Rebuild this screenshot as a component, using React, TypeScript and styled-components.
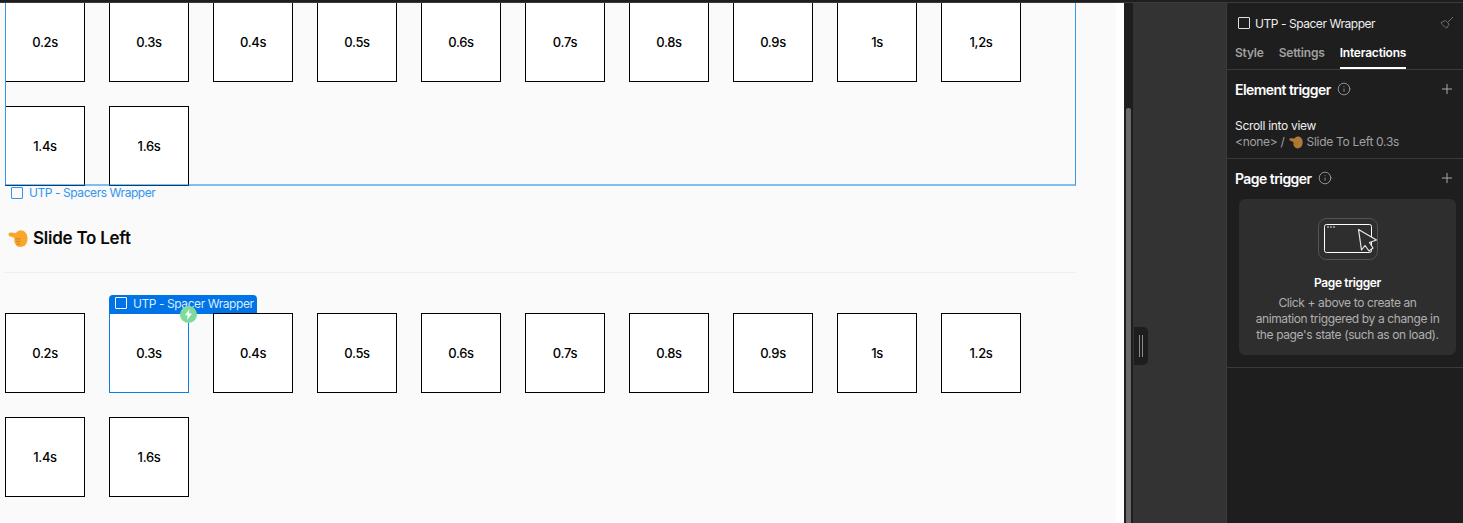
import React from 'react';
import styled, { createGlobalStyle } from 'styled-components';
import { Info, Plus } from 'lucide-react';

const GlobalStyle = createGlobalStyle`
  html, body {
    margin: 0;
    padding: 0;
    height: 100%;
    overflow: hidden;
    background: #333333;
    font-family: Inter, "Liberation Sans", sans-serif;
  }
  * {
    box-sizing: border-box;
  }
`;

const Page = styled.div`
  display: flex;
  flex-direction: column;
  width: 1463px;
  height: 523px;
  overflow: hidden;
`;

const TopBar = styled.div`
  flex: none;
  height: 3px;
  background: #1e1e1e;
  border-bottom: 1px solid #3a3a3a;
`;

const Main = styled.div`
  flex: 1;
  display: flex;
  min-height: 0;
`;

const Viewport = styled.div`
  flex: none;
  width: 1124px;
  padding-right: 8px;
  background: #ffffff;
  overflow: hidden;
`;

const Canvas = styled.div`
  height: 100%;
  padding-left: 5px;
  background: #fafafa;
`;

const Content = styled.div`
  width: 1071px;
  margin-top: -1px;
  display: flex;
  flex-direction: column;
`;

const Wrapper = styled.div`
  position: relative;

  &::after {
    content: '';
    position: absolute;
    inset: -2px 0 0 0;
    border-left: 1px solid #3a94e8;
    border-right: 1px solid #3a94e8;
    border-bottom: 2px solid rgba(10, 127, 232, 0.5);
    pointer-events: none;
  }
`;

const WrapperLabel = styled.div`
  position: absolute;
  left: 6px;
  top: 100%;
  display: flex;
  align-items: center;
  gap: 6px;
  font-size: 12px;
  line-height: 14px;
  letter-spacing: -0.43px;
  color: #2f95f2;
`;

const LabelSquare = styled.span<{ $color: string }>`
  flex: none;
  width: 12px;
  height: 12px;
  border: 1px solid ${(p) => p.$color};
  border-radius: 1px;
`;

const Grid = styled.div<{ $offset?: number }>`
  display: flex;
  flex-wrap: wrap;
  gap: 24px;
  margin-top: ${(p) => p.$offset ?? 0}px;
`;

const Box = styled.div<{ $selected?: boolean }>`
  position: relative;
  flex: none;
  width: 80px;
  height: 80px;
  display: flex;
  align-items: center;
  justify-content: center;
  background: #ffffff;
  border: 1px solid ${(p) => (p.$selected ? '#0a7fe8' : '#000000')};
  color: #000000;
  font-size: 13px;
  font-weight: 500;
  letter-spacing: -0.35px;
`;

const Tag = styled.div`
  position: absolute;
  left: -1px;
  top: -19px;
  width: 148px;
  height: 19px;
  display: flex;
  align-items: center;
  gap: 6px;
  padding: 0 0 3px 6px;
  background: #0073e6;
  border-radius: 4px 4px 0 0;
  color: #d9ecff;
  font-size: 12px;
  font-weight: 400;
  letter-spacing: -0.43px;
  white-space: nowrap;
`;

const Dot = styled.div`
  position: absolute;
  left: 70px;
  top: -8px;
  width: 17px;
  height: 17px;
  display: flex;
  align-items: center;
  justify-content: center;
  border-radius: 50%;
  background: #7ddc9b;
`;

const SectionTitle = styled.h2`
  display: flex;
  align-items: center;
  gap: 5px;
  height: 24px;
  margin: 40px 0 0;
  padding-left: 3px;
  color: #0a0a0a;
  font-size: 17px;
  font-weight: 600;
  letter-spacing: -0.25px;
`;

const Divider = styled.div`
  height: 1px;
  margin-top: 22px;
  background: #eeeeee;
`;

const ScrollTrack = styled.div`
  flex: none;
  width: 9px;
  padding: 105px 2px 0;
  background: #1e1e1e;
`;

const ScrollThumb = styled.div`
  height: 100%;
  background: #6b6b6b;
  border-radius: 2px 2px 0 0;
`;

const Gutter = styled.div`
  position: relative;
  flex: none;
  width: 93px;
  background: #333333;
`;

const Handle = styled.div`
  position: absolute;
  left: 1px;
  top: 324px;
  width: 14px;
  height: 38px;
  display: flex;
  align-items: center;
  justify-content: center;
  gap: 2px;
  background: #1e1e1e;
  border-radius: 0 5px 5px 0;
`;

const HandleLine = styled.span`
  width: 1px;
  height: 22px;
  background: #8a8a8a;
`;

const Panel = styled.aside`
  flex: none;
  width: 237px;
  background: #1e1e1e;
  border-left: 1px solid #3a3a3a;
`;

const PanelHeader = styled.div`
  display: flex;
  align-items: center;
  gap: 5px;
  height: 26px;
  margin-top: 7px;
  padding: 0 9px 0 11px;
  color: #eeeeee;
  font-size: 12px;
  letter-spacing: -0.45px;
`;

const HeaderName = styled.span`
  flex: 1;
`;

const Tabs = styled.div`
  display: flex;
  gap: 15px;
  height: 34px;
  padding-left: 8px;
  border-bottom: 1px solid #3a3a3a;
`;

const Tab = styled.div<{ $active?: boolean }>`
  height: 33px;
  margin-bottom: -1px;
  padding-top: 9px;
  color: ${(p) => (p.$active ? '#ffffff' : '#a0a0a0')};
  border-bottom: 2px solid ${(p) => (p.$active ? '#ffffff' : 'transparent')};
  font-size: 12px;
  font-weight: 600;
  line-height: 16px;
  letter-spacing: -0.2px;
`;

const Section = styled.section`
  padding: 0 8px;
  border-bottom: 1px solid #3a3a3a;
`;

const SectionHead = styled.div`
  display: flex;
  align-items: center;
  height: 40px;
  padding-bottom: 2px;
  color: #ffffff;
  font-size: 14px;
  font-weight: 600;
  letter-spacing: -0.55px;

  svg:last-child {
    margin-left: auto;
    color: #a8a8a8;
  }
`;

const InfoIcon = styled(Info)`
  margin-left: 6px;
  color: #a0a0a0;
`;

const Trigger = styled.div`
  padding: 8px 0 8px;
  font-size: 12px;
  line-height: 16px;
  letter-spacing: -0.3px;
`;

const TriggerName = styled.div`
  color: #eeeeee;
`;

const TriggerDetail = styled.div`
  display: flex;
  align-items: center;
  gap: 4px;
  color: #a0a0a0;
`;

const EmptyCard = styled.div`
  display: flex;
  flex-direction: column;
  align-items: center;
  margin: 0 0 12px 4px;
  width: 217px;
  height: 156px;
  padding-top: 19px;
  background: #2e2e2e;
  border-radius: 6px;
  text-align: center;
  font-size: 12px;
  line-height: 16px;
  letter-spacing: -0.38px;
  color: #b0b0b0;
`;

const EmptyTitle = styled.div`
  margin-top: 15px;
  margin-bottom: 4px;
  color: #ffffff;
  font-weight: 600;
  letter-spacing: -0.35px;
`;

const firstRow = ['0.2s', '0.3s', '0.4s', '0.5s', '0.6s', '0.7s', '0.8s', '0.9s', '1s', '1,2s', '1.4s', '1.6s'];
const secondRow = ['0.2s', '0.3s', '0.4s', '0.5s', '0.6s', '0.7s', '0.8s', '0.9s', '1s', '1.2s', '1.4s', '1.6s'];

const HandIcon = ({ size, muted }: { size: number; muted?: boolean }) => (
  <svg width={size} height={size} viewBox="0 0 20 20" style={{ flex: 'none', opacity: muted ? 0.85 : 1 }}>
    <path
      d="M0.500 6.500c0-1.300 1-2 2.200-1.900l5.300.3c1.200-1.600 2.800-2.700 4.600-2.700 3.700 0 6.900 2.800 6.900 8.600 0 5-2.800 8.200-6.800 8.200-3.200 0-5.100-1.600-5.700-3.700-.7-.8-.9-1.800-.5-2.700-.4-.8-.4-1.700 0-2.500L2.700 8.600C1.400 8.500.5 7.700.5 6.500z"
      fill={muted ? '#c98a3c' : '#f7a72c'}
    />
    <path d="M8 10.800h4M8.300 13.400h3.700M9 16h3" stroke="#cf7d1c" strokeWidth="0.9" strokeLinecap="round" fill="none" />
  </svg>
);

const BrushIcon = () => (
  <svg width="14" height="14" viewBox="0 0 14 14" fill="none" stroke="#6a6a6a" strokeWidth="1">
    <path d="M1 6.500 5.500 4.500 9 8 7 12C5 11.500 2.500 9.500 1 6.500z" />
    <path d="M7.500 6.500 13 1" />
  </svg>
);

const BoltIcon = () => (
  <svg width="9" height="11" viewBox="0 0 9 11">
    <path d="M5.400 0 1 6.200h2.800L3 11l5-6.600H5z" fill="#ffffff" />
  </svg>
);

const PageTriggerIcon = () => (
  <svg width="60" height="42" viewBox="0 0 60 42" fill="none">
    <rect x="0.500" y="0.500" width="59" height="41" rx="8" stroke="#555555" />
    <rect x="6.500" y="6.500" width="47" height="28" rx="2" stroke="#ffffff" />
    <path d="M9 9h2M12 9h2M15 9h2" stroke="#8a8a8a" strokeWidth="2" />
    <path
      d="M40.500 11.500 58.500 22 51.500 24.500 55 30 51 33 47 27.500 43.500 32z"
      fill="#2e2e2e"
      stroke="#e8e8e8"
      strokeWidth="1.200"
      strokeLinejoin="round"
    />
  </svg>
);

const App: React.FC = () => {
  return (
    <Page>
      <GlobalStyle />
      <TopBar />
      <Main>
        <Viewport>
          <Canvas>
            <Content>
              <Wrapper>
                <Grid>
                  {firstRow.map((label) => (
                    <Box key={label}>{label}</Box>
                  ))}
                </Grid>
                <WrapperLabel>
                  <LabelSquare $color="#2f95f2" />
                  UTP - Spacers Wrapper
                </WrapperLabel>
              </Wrapper>
              <SectionTitle>
                <HandIcon size={20} />
                Slide To Left
              </SectionTitle>
              <Divider />
              <Grid $offset={40}>
                {secondRow.map((label) =>
                  label === '0.3s' ? (
                    <Box key={label} $selected>
                      <Tag>
                        <LabelSquare $color="#ffffff" />
                        UTP - Spacer Wrapper
                      </Tag>
                      <Dot>
                        <BoltIcon />
                      </Dot>
                      {label}
                    </Box>
                  ) : (
                    <Box key={label}>{label}</Box>
                  ),
                )}
              </Grid>
            </Content>
          </Canvas>
        </Viewport>
        <ScrollTrack>
          <ScrollThumb />
        </ScrollTrack>
        <Gutter>
          <Handle>
            <HandleLine />
            <HandleLine />
          </Handle>
        </Gutter>
        <Panel>
          <PanelHeader>
            <LabelSquare $color="#e0e0e0" />
            <HeaderName>UTP - Spacer Wrapper</HeaderName>
            <BrushIcon />
          </PanelHeader>
          <Tabs>
            <Tab>Style</Tab>
            <Tab>Settings</Tab>
            <Tab $active>Interactions</Tab>
          </Tabs>
          <Section>
            <SectionHead>
              Element trigger
              <InfoIcon size={14} strokeWidth={1.5} />
              <Plus size={16} strokeWidth={1.5} />
            </SectionHead>
            <Trigger>
              <TriggerName>Scroll into view</TriggerName>
              <TriggerDetail>
                &lt;none&gt; / <HandIcon size={14} muted /> Slide To Left 0.3s
              </TriggerDetail>
            </Trigger>
          </Section>
          <Section>
            <SectionHead>
              Page trigger
              <InfoIcon size={14} strokeWidth={1.5} />
              <Plus size={16} strokeWidth={1.5} />
            </SectionHead>
            <EmptyCard>
              <PageTriggerIcon />
              <EmptyTitle>Page trigger</EmptyTitle>
              Click + above to create an
              <br />
              animation triggered by a change in
              <br />
              the page's state (such as on load).
            </EmptyCard>
          </Section>
        </Panel>
      </Main>
    </Page>
  );
};

export default App;
